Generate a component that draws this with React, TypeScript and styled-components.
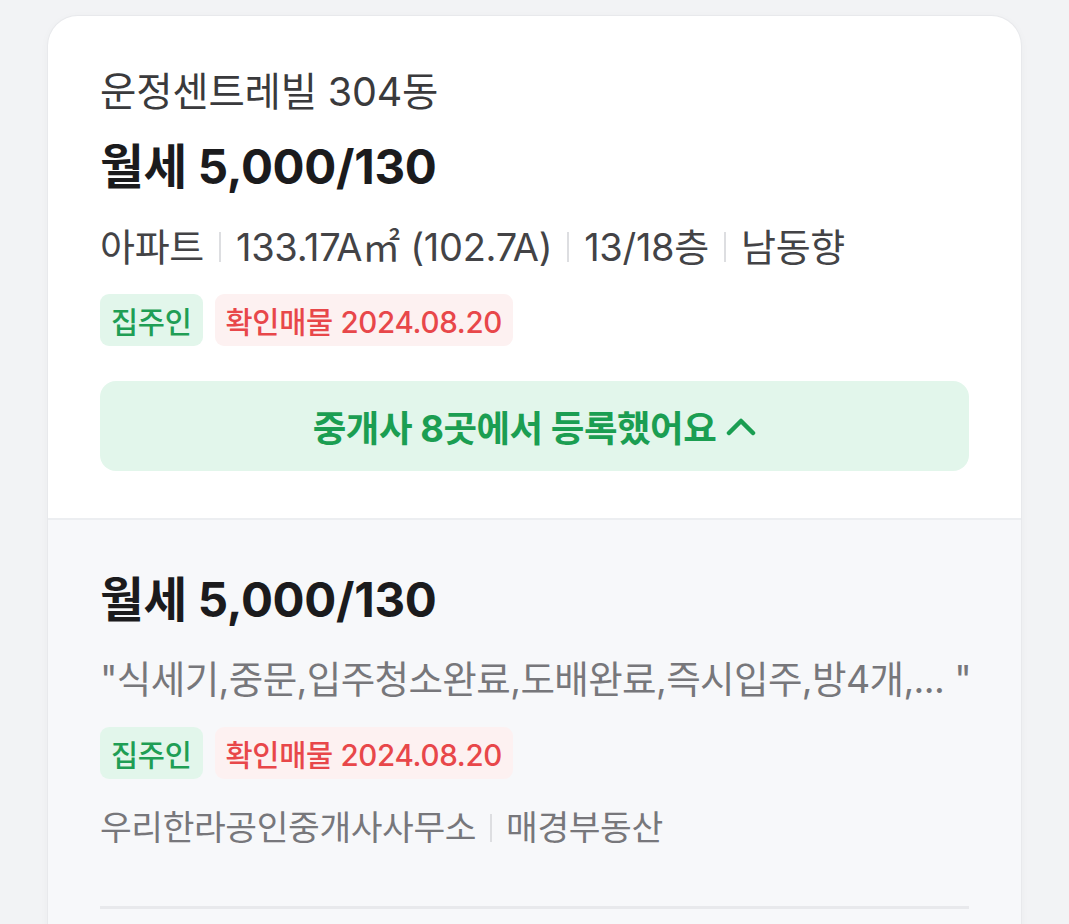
import * as React from 'react';
import styled, { createGlobalStyle } from 'styled-components';

const GlobalStyle = createGlobalStyle`
  html, body {
    margin: 0;
    padding: 0;
    background: #f2f3f5;
    font-family: Inter, "Noto Sans CJK KR", "Noto Sans", sans-serif;
    -webkit-font-smoothing: antialiased;
  }
  body {
    height: 924px;
    overflow: hidden;
  }
`;

const Page = styled.div`
  padding: 16px 48px 0 48px;
`;

const Card = styled.div`
  background: #ffffff;
  border-radius: 30px 30px 0 0;
  box-shadow: 0 0 0 1px #e8e9ec, 0 2px 10px rgba(0, 0, 0, 0.04);
  overflow: hidden;
`;

const Top = styled.section`
  padding: 53px 52px 47px 52px;
  display: flex;
  flex-direction: column;
`;

const Bottom = styled.section`
  background: #f7f8fa;
  border-top: 2px solid #eceef1;
  padding: 52px 52px 200px 52px;
  display: flex;
  flex-direction: column;
`;

const Title = styled.div`
  font-size: 39.5px;
  line-height: 46px;
  color: #3a3a3c;
  letter-spacing: -0.2px;
`;

const Price = styled.div<{ $top?: number }>`
  margin-top: ${({ $top }) => $top ?? 0}px;
  font-size: 47.5px;
  line-height: 56px;
  font-weight: 700;
  color: #1b1b1d;
  letter-spacing: -0.3px;
`;

const Info = styled.div`
  margin-top: 30px;
  display: flex;
  align-items: center;
  font-size: 38px;
  line-height: 44px;
  color: #434346;
  letter-spacing: -0.3px;
`;

const Sep = styled.span<{ $h?: number; $gap?: number }>`
  display: inline-block;
  width: 2px;
  height: ${({ $h }) => $h ?? 30}px;
  background: #dddee1;
  margin: 0 ${({ $gap }) => $gap ?? 15}px;
`;

const Badges = styled.div<{ $top: number }>`
  margin-top: ${({ $top }) => $top}px;
  display: flex;
  gap: 12px;
`;

const Badge = styled.span<{ $tone: 'green' | 'red' }>`
  height: 52px;
  padding: 0 11px;
  border-radius: 9px;
  display: inline-flex;
  align-items: center;
  font-size: 29.5px;
  font-weight: 500;
  letter-spacing: -0.3px;
  background: ${({ $tone }) => ($tone === 'green' ? '#e2f6eb' : '#fdf1f1')};
  color: ${({ $tone }) => ($tone === 'green' ? '#1f9e55' : '#e8474a')};
`;

const AgentButton = styled.button`
  margin-top: 35px;
  height: 90px;
  border: none;
  border-radius: 16px;
  background: #e2f6eb;
  color: #1b9e52;
  font-family: inherit;
  font-size: 36.5px;
  font-weight: 700;
  letter-spacing: -0.5px;
  display: flex;
  align-items: center;
  justify-content: center;
  gap: 10px;
  cursor: pointer;
`;

const Desc = styled.div`
  margin-top: 30px;
  font-size: 37.5px;
  line-height: 44px;
  color: #77777b;
  letter-spacing: -0.6px;
  white-space: nowrap;
`;

const Broker = styled.div`
  margin-top: 28px;
  display: flex;
  align-items: center;
  font-size: 34.5px;
  line-height: 42px;
  color: #77777b;
  letter-spacing: -0.4px;
`;

const Rule = styled.div`
  margin-top: 57px;
  height: 3px;
  background: #e8e9ec;
`;

function ChevronUp() {
  return (
    <svg width="30" height="20" viewBox="0 0 30 20" fill="none">
      <path d="M3 17 L15 5 L27 17" stroke="#1b9e52" strokeWidth="4.5" strokeLinecap="round" strokeLinejoin="round" />
    </svg>
  );
}

export default function App() {
  return (
    <>
      <GlobalStyle />
      <Page>
        <Card>
          <Top>
            <Title>운정센트레빌 304동</Title>
            <Price $top={24}>월세 5,000/130</Price>
            <Info>
              아파트<Sep />133.17A㎡ (102.7A)<Sep />13/18층<Sep />남동향
            </Info>
            <Badges $top={25}>
              <Badge $tone="green">집주인</Badge>
              <Badge $tone="red">확인매물 2024.08.20</Badge>
            </Badges>
            <AgentButton>
              중개사 8곳에서 등록했어요
              <ChevronUp />
            </AgentButton>
          </Top>
          <Bottom>
            <Price>월세 5,000/130</Price>
            <Desc>"식세기,중문,입주청소완료,도배완료,즉시입주,방4개,... "</Desc>
            <Badges $top={25}>
              <Badge $tone="green">집주인</Badge>
              <Badge $tone="red">확인매물 2024.08.20</Badge>
            </Badges>
            <Broker>
              우리한라공인중개사사무소<Sep $h={28} $gap={14} />매경부동산
            </Broker>
            <Rule />
          </Bottom>
        </Card>
      </Page>
    </>
  );
}
